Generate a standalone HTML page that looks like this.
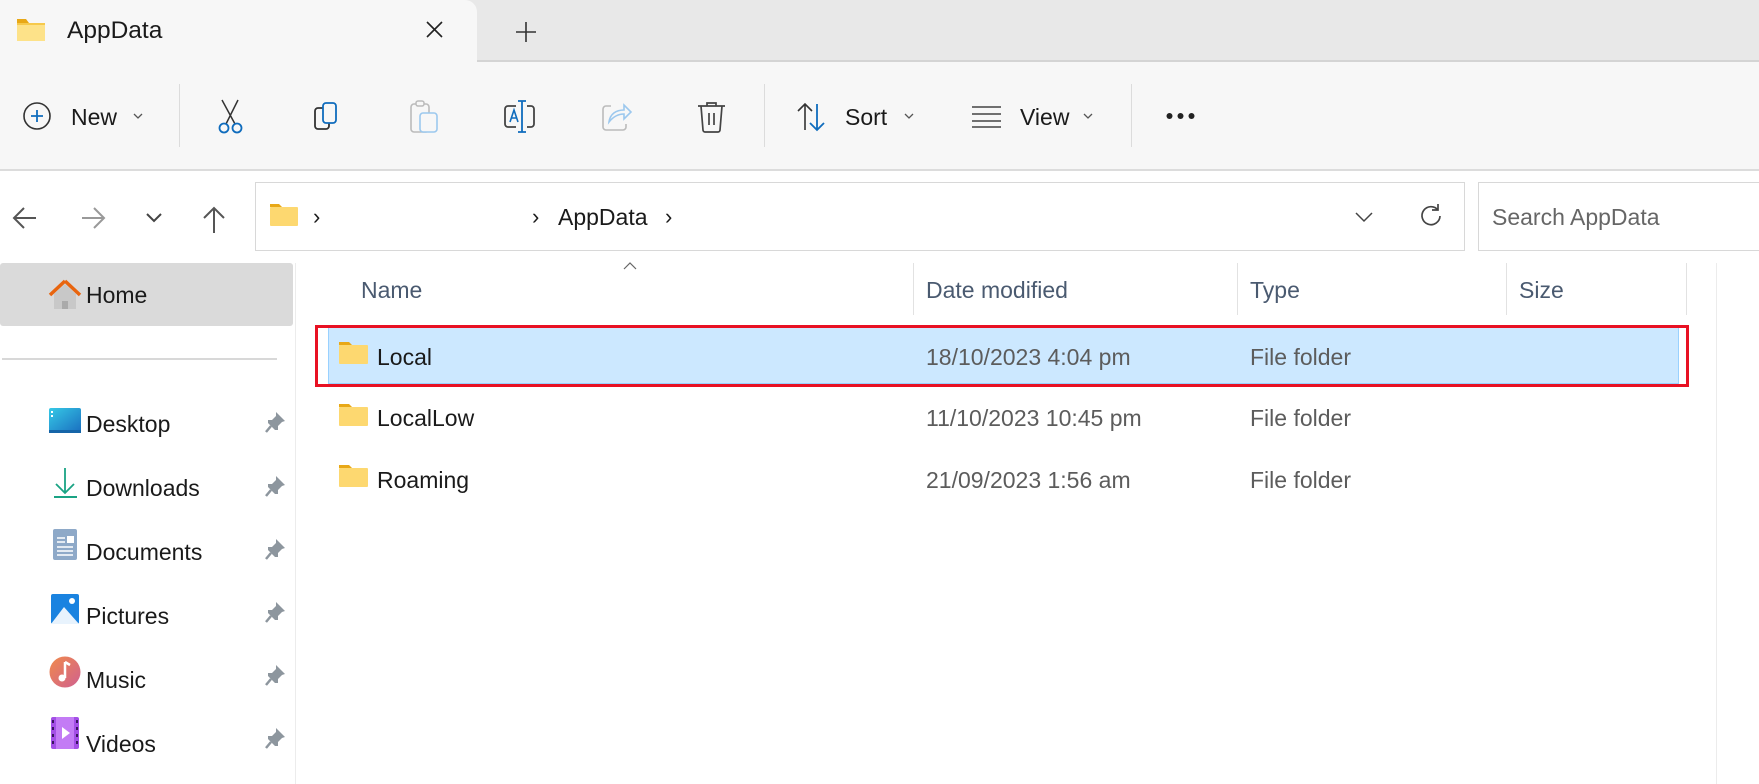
<!DOCTYPE html><html><head><meta charset="utf-8"><style>
*{margin:0;padding:0;box-sizing:border-box}
body{width:1759px;height:784px;overflow:hidden;background:#fff;font-family:"Liberation Sans",sans-serif;position:relative;color:#1a1a1a}
.a{position:absolute}
.t{position:absolute;white-space:nowrap;line-height:1;font-size:22px}
.s{font-size:23px}
svg{position:absolute;overflow:visible}
</style></head><body>
<div class="a" style="left:0;top:0;width:1759px;height:62px;background:#e8e8e8;border-bottom:2px solid #d4d4d4"></div>
<div class="a" style="left:0;top:0;width:477px;height:63px;background:#f7f7f7;border-top-right-radius:12px"></div>
<svg style="left:17px;top:19px" width="28" height="22"><path d="M0 2h9l2 2h17v18H0z" fill="#f6c94c"/><path d="M0 0h9l3 4H0z" fill="#e8a817"/><rect x="0" y="6" width="28" height="16" fill="#fde289"/></svg>
<div class="t" style="left:67px;top:19px;font-size:24.5px">AppData</div>
<svg style="left:426px;top:21px" width="17" height="17"><path d="M1 1L16 16M16 1L1 16" stroke="#222" stroke-width="1.6"/></svg>
<svg style="left:516px;top:22px" width="20" height="20"><path d="M10 0V20M0 10H20" stroke="#333" stroke-width="1.6"/></svg>
<div class="a" style="left:0;top:62px;width:1759px;height:109px;background:#f7f7f7;border-bottom:2px solid #dcdcdc"></div>
<svg style="left:23px;top:102px" width="30" height="30"><circle cx="14" cy="14" r="13" fill="none" stroke="#333" stroke-width="1.6"/><path d="M14 8V20M8 14H20" stroke="#0f6cbd" stroke-width="1.8"/></svg>
<div class="t s" style="left:71px;top:106px">New</div>
<svg style="left:133px;top:113px" width="10" height="6"><path d="M1 1L5 5L9 1" fill="none" stroke="#555" stroke-width="1.3"/></svg>
<div class="a" style="left:179px;top:84px;width:1px;height:63px;background:#dcdcdc"></div>
<svg style="left:218px;top:100px" width="28" height="34"><path d="M4 0L17 24M20 0L8 24" stroke="#333" stroke-width="1.5" fill="none"/><circle cx="6" cy="28" r="4.5" fill="none" stroke="#0f6cbd" stroke-width="1.8"/><circle cx="19" cy="28" r="4.5" fill="none" stroke="#0f6cbd" stroke-width="1.8"/></svg>
<svg style="left:314px;top:102px" width="30" height="30"><rect x="1" y="6" width="14" height="21" rx="3" fill="none" stroke="#333" stroke-width="1.8"/><rect x="9" y="1" width="13" height="20" rx="3" fill="#f7f7f7" stroke="#0f6cbd" stroke-width="1.8"/></svg>
<svg style="left:410px;top:100px" width="30" height="34"><rect x="1" y="4" width="18" height="28" rx="3" fill="none" stroke="#bbb" stroke-width="1.6"/><rect x="6" y="1" width="8" height="5" rx="2" fill="#f7f7f7" stroke="#bbb" stroke-width="1.5"/><rect x="10" y="13" width="17" height="19" rx="3" fill="#f7f7f7" stroke="#9cc8ee" stroke-width="1.6"/></svg>
<svg style="left:504px;top:100px" width="34" height="34"><path d="M12 6H4a3 3 0 0 0-3 3v15a3 3 0 0 0 3 3h8M23 6h4a3 3 0 0 1 3 3v15a3 3 0 0 1-3 3h-4" fill="none" stroke="#444" stroke-width="1.8"/><path d="M18 1V32M14 1h8M14 32h8" stroke="#0f6cbd" stroke-width="1.8"/><path d="M6 22L10 10L14 22M7.5 18h5" fill="none" stroke="#0f6cbd" stroke-width="1.6"/></svg>
<svg style="left:601px;top:100px" width="32" height="32"><path d="M10 6H5a3 3 0 0 0-3 3v18a3 3 0 0 0 3 3h17a3 3 0 0 0 3-3v-3" fill="none" stroke="#bbb" stroke-width="1.6"/><path d="M8 22c1-8 7-12 15-12V5l7 7-7 7v-5c-6 0-11 3-15 8z" fill="none" stroke="#9cc8ee" stroke-width="1.6"/></svg>
<svg style="left:697px;top:101px" width="30" height="32"><path d="M1 5H28M10 5V2h9v3M4 5l2 24a2 2 0 0 0 2 2h13a2 2 0 0 0 2-2l2-24M12 12v12M17 12v12" fill="none" stroke="#444" stroke-width="1.7"/></svg>
<div class="a" style="left:764px;top:84px;width:1px;height:63px;background:#dcdcdc"></div>
<svg style="left:797px;top:103px" width="32" height="28"><path d="M8 27V1M1 8L8 1L15 8" fill="none" stroke="#333" stroke-width="1.6"/><path d="M20 1V27M13 20L20 27L27 20" fill="none" stroke="#0f6cbd" stroke-width="1.8"/></svg>
<div class="t s" style="left:845px;top:106px">Sort</div>
<svg style="left:904px;top:113px" width="10" height="6"><path d="M1 1L5 5L9 1" fill="none" stroke="#555" stroke-width="1.3"/></svg>
<svg style="left:972px;top:106px" width="30" height="22"><path d="M0 1H29M0 8H29M0 15H29M0 21H29" stroke="#444" stroke-width="1.6"/></svg>
<div class="t s" style="left:1020px;top:106px">View</div>
<svg style="left:1083px;top:113px" width="10" height="6"><path d="M1 1L5 5L9 1" fill="none" stroke="#555" stroke-width="1.3"/></svg>
<div class="a" style="left:1131px;top:84px;width:1px;height:63px;background:#dcdcdc"></div>
<svg style="left:1166px;top:112px" width="30" height="8"><circle cx="3.5" cy="4" r="3" fill="#222"/><circle cx="14.5" cy="4" r="3" fill="#222"/><circle cx="25.5" cy="4" r="3" fill="#222"/></svg>
<svg style="left:12px;top:206px" width="25" height="24"><path d="M24 12H2M12 2L2 12L12 22" fill="none" stroke="#555" stroke-width="2"/></svg>
<svg style="left:82px;top:206px" width="25" height="24"><path d="M0 12H22M12 2L22 12L12 22" fill="none" stroke="#999" stroke-width="2"/></svg>
<svg style="left:146px;top:213px" width="16" height="10"><path d="M1 1L8 8L15 1" fill="none" stroke="#444" stroke-width="2"/></svg>
<svg style="left:202px;top:206px" width="24" height="27"><path d="M12 27V2M2 12L12 2L22 12" fill="none" stroke="#555" stroke-width="2"/></svg>
<div class="a" style="left:255px;top:182px;width:1210px;height:69px;border:1px solid #d8d8d8;background:#fff"></div>
<svg style="left:270px;top:204px" width="28" height="22"><path d="M0 0h9l3 3H0z" fill="#e8a817"/><rect x="0" y="3" width="28" height="19" rx="1" fill="#fdd870"/></svg>
<div class="t" style="left:313px;top:206px">›</div>
<div class="t" style="left:532px;top:206px">›</div>
<div class="t s" style="left:558px;top:206px">AppData</div>
<div class="t" style="left:665px;top:206px">›</div>
<svg style="left:1355px;top:212px" width="18" height="10"><path d="M1 1L9 9L17 1" fill="none" stroke="#444" stroke-width="1.5"/></svg>
<svg style="left:1420px;top:203px" width="22" height="23"><path d="M18 7A9 9 0 1 0 20 13M18 1V7H12" fill="none" stroke="#444" stroke-width="1.7"/></svg>
<div class="a" style="left:1478px;top:182px;width:290px;height:69px;border:1px solid #d8d8d8;background:#fff"></div>
<div class="t s" style="left:1492px;top:206px;color:#666">Search AppData</div>
<div class="a" style="left:0;top:263px;width:293px;height:63px;background:#dadada;border-radius:3px"></div>
<svg style="left:48px;top:279px" width="34" height="32"><path d="M17 2L2 16M17 2L32 16" stroke="#e8650f" stroke-width="3.5" fill="none"/><path d="M6 15L17 5L28 15V30H6z" fill="#c8c8c8"/><rect x="14" y="22" width="6" height="8" fill="#aaa"/></svg>
<div class="t s" style="left:86px;top:284px">Home</div>
<div class="a" style="left:2px;top:358px;width:275px;height:2px;background:#d8d8d8"></div>
<div class="a" style="left:295px;top:263px;width:1px;height:521px;background:#ececec"></div>
<svg style="left:49px;top:408px" width="32" height="28"><defs><linearGradient id="g" x1="0" y1="0" x2="1" y2="1"><stop offset="0" stop-color="#36c9e6"/><stop offset="1" stop-color="#1a6fc0"/></linearGradient></defs><rect x="0" y="0" width="32" height="24" rx="2" fill="url(#g)"/><rect x="2" y="3" width="2" height="2" fill="#fff"/><rect x="2" y="7" width="2" height="2" fill="#fff"/><rect x="0" y="22" width="32" height="3" fill="#1565a8"/></svg>
<div class="t s" style="left:86px;top:413px">Desktop</div>
<svg style="left:53px;top:468px" width="26" height="30"><path d="M12 0V25M3 16L12 25L21 16" fill="none" stroke="#1aa384" stroke-width="1.8"/><path d="M1 29H24" stroke="#1aa384" stroke-width="2"/></svg>
<div class="t s" style="left:86px;top:477px">Downloads</div>
<svg style="left:53px;top:529px" width="24" height="32"><rect width="24" height="31" rx="2" fill="#8ea9c8"/><path d="M4 9h8M4 13h8M4 18h16M4 22h16M4 26h16" stroke="#fff" stroke-width="1.6"/><rect x="14" y="7" width="7" height="7" fill="#fff"/></svg>
<div class="t s" style="left:86px;top:541px">Documents</div>
<svg style="left:51px;top:594px" width="28" height="30"><rect width="28" height="30" rx="2" fill="#1a83e0"/><path d="M0 30L13 13L28 30z" fill="#e8f3fd"/><circle cx="21" cy="7" r="3" fill="#fff"/></svg>
<div class="t s" style="left:86px;top:605px">Pictures</div>
<svg style="left:49px;top:656px" width="32" height="32"><defs><linearGradient id="m" x1="0" y1="0" x2="1" y2="1"><stop offset="0" stop-color="#f08a4b"/><stop offset="1" stop-color="#d06090"/></linearGradient></defs><circle cx="16" cy="16" r="15.5" fill="url(#m)"/><path d="M16 6V22" stroke="#fff" stroke-width="2.5"/><circle cx="13" cy="22" r="3.5" fill="#fff"/><path d="M16 6l5 3" stroke="#fff" stroke-width="2.5"/></svg>
<div class="t s" style="left:86px;top:669px">Music</div>
<svg style="left:51px;top:717px" width="28" height="32"><rect width="28" height="32" rx="2" fill="#a34fe6"/><rect x="5" y="0" width="18" height="32" fill="#c37bf5"/><path d="M11 10L19 16L11 22z" fill="#fff"/><g fill="#3a1460"><rect x="1" y="3" width="2" height="3"/><rect x="1" y="10" width="2" height="3"/><rect x="1" y="17" width="2" height="3"/><rect x="1" y="24" width="2" height="3"/><rect x="25" y="3" width="2" height="3"/><rect x="25" y="10" width="2" height="3"/><rect x="25" y="17" width="2" height="3"/><rect x="25" y="24" width="2" height="3"/></g></svg>
<div class="t s" style="left:86px;top:733px">Videos</div>
<svg style="left:265px;top:411px" width="22" height="22"><path d="M11 1L20 10L17 11L13 15L13 19L10 19L3 12L3 9L7 9L11 5z" fill="#8d969e"/><path d="M6 15L1 21" stroke="#8d969e" stroke-width="2.5"/></svg>
<svg style="left:265px;top:475px" width="22" height="22"><path d="M11 1L20 10L17 11L13 15L13 19L10 19L3 12L3 9L7 9L11 5z" fill="#8d969e"/><path d="M6 15L1 21" stroke="#8d969e" stroke-width="2.5"/></svg>
<svg style="left:265px;top:538px" width="22" height="22"><path d="M11 1L20 10L17 11L13 15L13 19L10 19L3 12L3 9L7 9L11 5z" fill="#8d969e"/><path d="M6 15L1 21" stroke="#8d969e" stroke-width="2.5"/></svg>
<svg style="left:265px;top:601px" width="22" height="22"><path d="M11 1L20 10L17 11L13 15L13 19L10 19L3 12L3 9L7 9L11 5z" fill="#8d969e"/><path d="M6 15L1 21" stroke="#8d969e" stroke-width="2.5"/></svg>
<svg style="left:265px;top:664px" width="22" height="22"><path d="M11 1L20 10L17 11L13 15L13 19L10 19L3 12L3 9L7 9L11 5z" fill="#8d969e"/><path d="M6 15L1 21" stroke="#8d969e" stroke-width="2.5"/></svg>
<svg style="left:265px;top:727px" width="22" height="22"><path d="M11 1L20 10L17 11L13 15L13 19L10 19L3 12L3 9L7 9L11 5z" fill="#8d969e"/><path d="M6 15L1 21" stroke="#8d969e" stroke-width="2.5"/></svg>
<svg style="left:623px;top:262px" width="14" height="8"><path d="M1 7L7 1L13 7" fill="none" stroke="#666" stroke-width="1.2"/></svg>
<div class="t s" style="left:361px;top:279px;color:#4a5a70">Name</div>
<div class="t s" style="left:926px;top:279px;color:#4a5a70">Date modified</div>
<div class="t s" style="left:1250px;top:279px;color:#4a5a70">Type</div>
<div class="t s" style="left:1519px;top:279px;color:#4a5a70">Size</div>
<div class="a" style="left:913px;top:263px;width:1px;height:52px;background:#e2e2e2"></div>
<div class="a" style="left:1237px;top:263px;width:1px;height:52px;background:#e2e2e2"></div>
<div class="a" style="left:1506px;top:263px;width:1px;height:52px;background:#e2e2e2"></div>
<div class="a" style="left:1686px;top:263px;width:1px;height:52px;background:#e2e2e2"></div>
<div class="a" style="left:1716px;top:263px;width:1px;height:521px;background:#ececec"></div>
<div class="a" style="left:328px;top:327px;width:1351px;height:57px;background:#cce8ff;border:1px solid #99d1ff"></div>
<div class="a" style="left:315px;top:325px;width:1374px;height:62px;border:3px solid #e81123"></div>
<svg style="left:339px;top:342px" width="29" height="22"><path d="M0 0h10l3 3H0z" fill="#e8a817"/><rect x="0" y="3" width="29" height="19" rx="1" fill="#fdd870"/></svg>
<div class="t s" style="left:377px;top:346px">Local</div>
<div class="t s" style="left:926px;top:346px;color:#5c5c5c">18/10/2023 4:04 pm</div>
<div class="t s" style="left:1250px;top:346px;color:#5c5c5c">File folder</div>
<svg style="left:339px;top:404px" width="29" height="22"><path d="M0 0h10l3 3H0z" fill="#e8a817"/><rect x="0" y="3" width="29" height="19" rx="1" fill="#fdd870"/></svg>
<div class="t s" style="left:377px;top:407px">LocalLow</div>
<div class="t s" style="left:926px;top:407px;color:#5c5c5c">11/10/2023 10:45 pm</div>
<div class="t s" style="left:1250px;top:407px;color:#5c5c5c">File folder</div>
<svg style="left:339px;top:465px" width="29" height="22"><path d="M0 0h10l3 3H0z" fill="#e8a817"/><rect x="0" y="3" width="29" height="19" rx="1" fill="#fdd870"/></svg>
<div class="t s" style="left:377px;top:469px">Roaming</div>
<div class="t s" style="left:926px;top:469px;color:#5c5c5c">21/09/2023 1:56 am</div>
<div class="t s" style="left:1250px;top:469px;color:#5c5c5c">File folder</div>
</body></html>
